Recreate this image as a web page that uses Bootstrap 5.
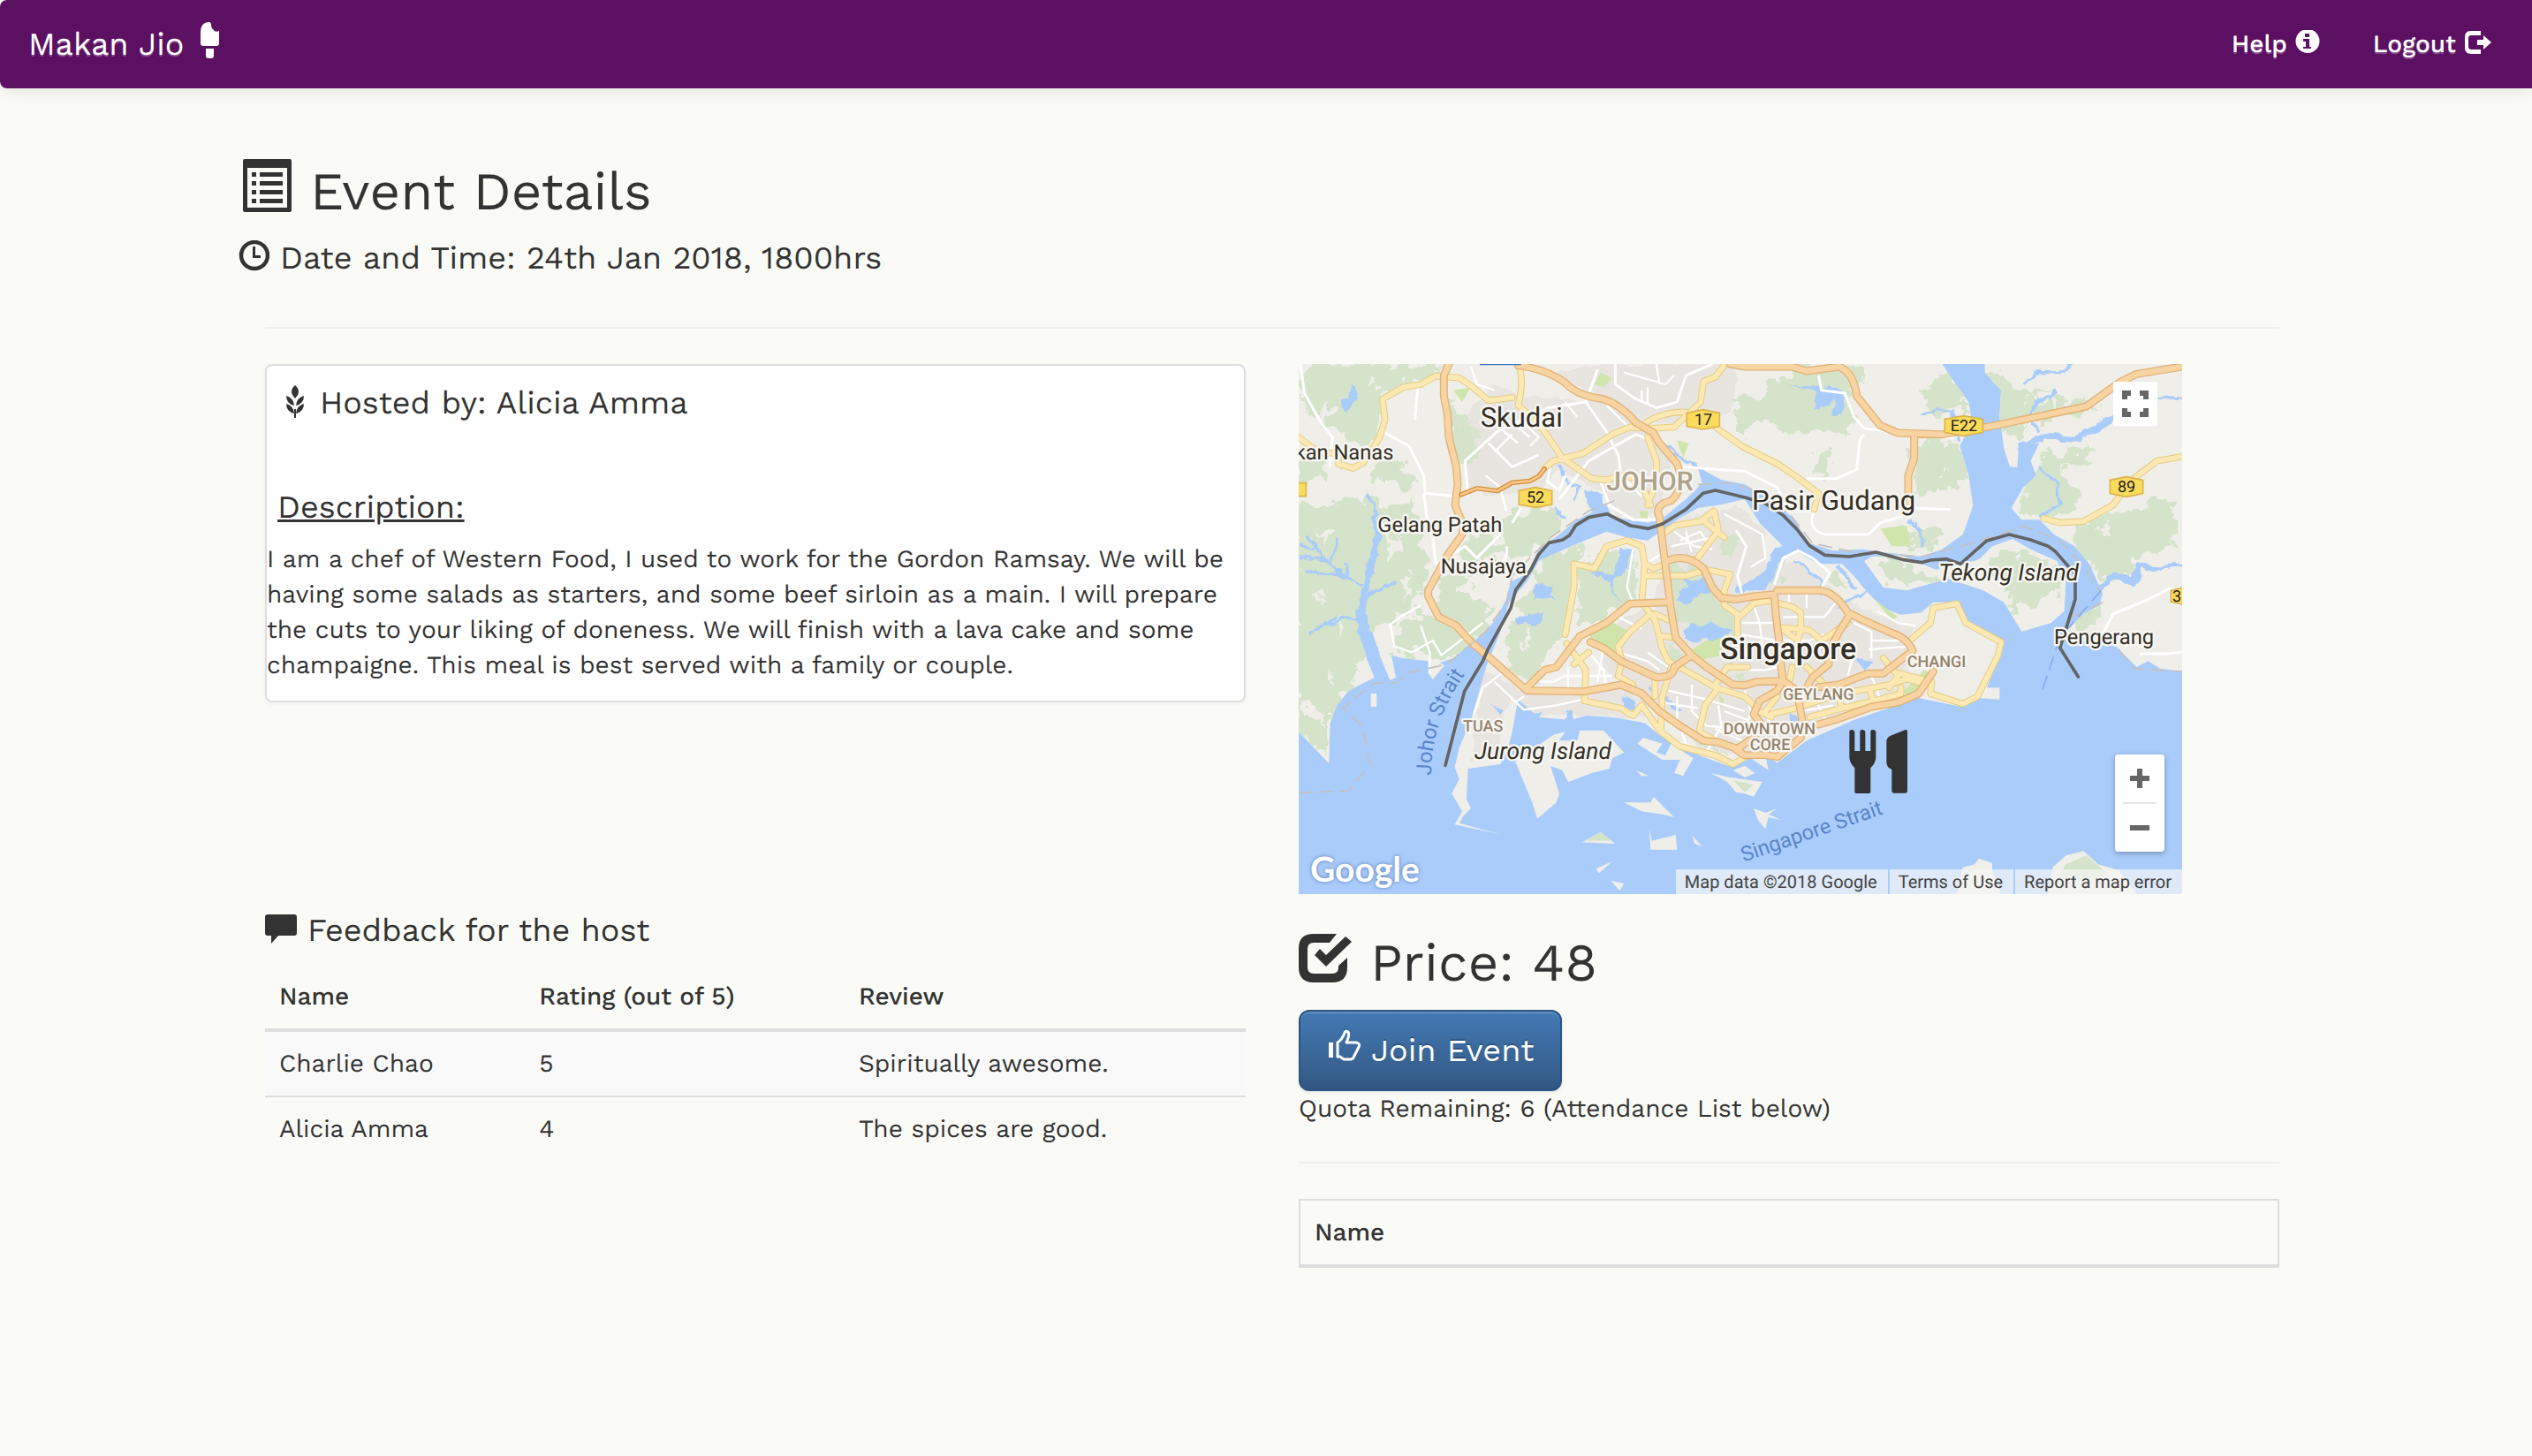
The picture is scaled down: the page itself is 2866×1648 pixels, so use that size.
<!DOCTYPE html>
<html lang="en">
<head>
<meta charset="utf-8">
<meta name="viewport" content="width=device-width, initial-scale=1">
<title>Makan Jio - Event Details</title>
<link href="https://cdn.jsdelivr.net/npm/bootstrap@5.3.0/dist/css/bootstrap.min.css" rel="stylesheet">
<style>
  body { background: #fafbf7; color: #333; font-family: "Work Sans", Inter, "Liberation Sans", sans-serif; font-size: 28px; line-height: 40px; text-rendering: geometricPrecision; }
  .topbar { background: #5c1062; min-height: 100px; padding: 0 46px 0 32px; border-radius: 8px 0 0 8px; box-shadow: 0 2px 18px rgba(0,0,0,.1); }
  .topbar a { color: #fff; text-decoration: none; text-shadow: 0 2px 0 rgba(255,255,255,.25); }
  .topbar .site-name { font-size: 36px; line-height: 40px; }
  .topbar .menu-link { font-size: 28px; font-weight: 500; }
  .page-wrap { max-width: 2340px; padding: 76px 23px 0 37px; margin: 0 auto; }
  .heading-block { margin-left: -30px; padding-bottom: 58px; }
  h1, h2, h3 { font-weight: 400; margin: 0; }
  h1, .price-line { font-size: 60px; line-height: 66px; }
  h2, h3 { font-size: 36px; line-height: 40px; }
  h2, h3 { gap: 12px; }
  h2 { margin-top: 22px; }
  h1 { gap: 20px; }
  h1 span { padding-top: 8px; }
  .price-line { gap: 20px; margin-top: 41px; padding-bottom: 20px; }
  .price-line span { padding-top: 4px; }
  hr { margin: 0; border: 0; border-top: 2px solid #eee; opacity: 1; }
  .split { --bs-gutter-x: 60px; margin-top: 40px; }
  .host-panel { border: 2px solid #ddd; border-radius: 8px; background: #fff; box-shadow: 0 2px 4px rgba(0,0,0,.05); padding: 22px 0 20px; }
  .desc-title { margin-top: 78px; padding-left: 12px; }
  .desc-text { margin: 0; padding-top: 19px; }
  .feedback { margin-top: 238px; }
  .quota { margin: 0 0 40px; }
  .plain-table { margin: 0; --bs-table-bg: transparent; --bs-table-color: #333; --bs-table-striped-color: #333; --bs-table-striped-bg: #f9f9f9; color: #333; border-color: #ddd; }
  .plain-table > :not(caption) > * > * { padding: 16px; border-bottom: 0; border-top: 2px solid #ddd; }
  .plain-table > thead > tr > th { font-weight: 500; border-top: 0; border-bottom: 4px solid #ddd; }
  .plain-table > tbody > tr:first-child > td { border-top: 0; }
  .feedback .plain-table { margin-top: 19px; }
  .plain-table.boxed { border: 2px solid #ddd; border-bottom: 0; margin-top: 40px; }
  .btn-join { background: linear-gradient(#4479b5, #325882); border: 2px solid #2b5580; border-radius: 12px; color: #fff; font-size: 36px; line-height: 48px; padding: 20px 30px; box-shadow: inset 0 2px 0 rgba(255,255,255,.15), 0 2px 4px rgba(0,0,0,.08); text-shadow: 0 -2px 0 rgba(0,0,0,.2); }
  .map-box { max-width: 1000px; aspect-ratio: 5 / 3; overflow: hidden; font-family: Roboto, sans-serif; }
  .map-box > svg { width: 100%; height: 100%; }
  .map-full { top: 20px; right: 28px; width: 50px; height: 50px; border: 0; padding: 10px; background: #fff; border-radius: 2px; line-height: 0; }
  .map-zoom { right: 20px; bottom: 48px; width: 56px; background: #fff; border-radius: 4px; box-shadow: 0 2px 6px rgba(0,0,0,.3); }
  .map-zoom button { height: 54px; border: 0; background: none; padding: 0; }
  .map-zoom .bar-line { height: 2px; margin: 0 9px; background: #e6e6e6; }
  .map-credit { right: 0; bottom: 0; gap: 2px; font-size: 20px; line-height: 28px; }
  .map-credit > * { background: rgba(245,245,245,.7); color: #444; text-decoration: none; padding: 0 12px 0 10px; }
  .map-logo { left: 13px; bottom: 8px; font-family: Lato, sans-serif; font-size: 39px; line-height: 40px; color: #fff; font-weight: 700; text-shadow: 0 0 4px rgba(60,90,150,.7); text-decoration: none; }
  svg { display: block; flex: none; }
  .land { fill: #efeee9; } .park { fill: #d5e3ca; } .town { fill: #e8e4e0; } .sea { fill: #aaccfb; } .lawn { fill: #cfe5ab; }
  .river { stroke: #aaccfb; } .minor { stroke: #fff; stroke-width: 9; }
  .case-y { stroke: #e5cd83; stroke-width: 23; } .core-y { stroke: #fce8b2; stroke-width: 17; }
  .case-o { stroke: #e2b276; stroke-width: 27; } .core-o { stroke: #f8d4a3; stroke-width: 19; }
  .lbl text { paint-order: stroke; stroke: #f7f6f2; stroke-width: 14; stroke-linejoin: round; fill: #332f26; }
  .lbl .t90 { font-size: 93px; } .lbl .t72 { font-size: 71px; } .lbl .area { font-size: 54px; font-weight: 500; fill: #94826a; }
  .lbl .ital { font-size: 79px; font-style: italic; } .lbl .capital { font-size: 102px; font-weight: 500; } .lbl .state { font-size: 90px; font-weight: 500; fill: #ada28a; }
  .water-lbl { font-size: 71px; fill: #5a85c8; }
  .shield path { fill: #fadb5c; stroke: #dcb54b; stroke-width: 5; } .shield text { font-size: 54px; fill: #222; text-anchor: middle; }
</style>
<script src="https://cdn.jsdelivr.net/npm/bootstrap@5.3.0/dist/js/bootstrap.bundle.min.js"></script>
</head>
<body>
<nav class="topbar d-flex justify-content-between align-items-center">
  <a href="#" class="site-name d-flex align-items-center">Makan Jio
    <svg class="ms-3" width="30" height="52" viewBox="-1 0 30 52" fill="#fff"><path d="M2 13Q2 1 12 1q2 0 2 4 0 3 3 5 1 3 6 1v14q0 3-3 3H5q-3 0-3-3z"/><path d="M8 31h9v8q0 3-3 3h-3q-3 0-3-3z"/></svg></a>
  <div class="d-flex">
    <a href="#" class="menu-link d-flex align-items-center me-5 pe-2">Help
      <svg class="ms-2" width="33" height="32" viewBox="0 0 33 32"><circle cx="15" cy="12.500" r="13.500" fill="#fff"/><path fill="#5c1062" d="M12 4h5v4h-5zM10 10h7v9h2v2h-9v-2h3v-6h-3z"/></svg></a>
    <a href="#" class="menu-link d-flex align-items-center">Logout
      <svg class="ms-2" width="32" height="32" viewBox="0 0 32 32" fill="#fff"><path d="M20 1H9Q2 1 2 8v12q0 7 7 7h11v-5H9q-3 0-3-3V9q0-3 3-3h11z"/><path d="M16 11h7V6l9 8-9 8v-5h-7z"/></svg></a>
  </div>
</nav>

<main class="page-wrap">
  <header class="heading-block">
    <h1 class="d-flex align-items-start"><svg class="ms-1" width="57" height="66" viewBox="0 0 57 66"><path fill="#333" fill-rule="evenodd" d="M3 4h51q2 0 2 2v56q0 2-2 2H3q-2 0-2-2V6q0-2 2-2zm3 10v45h45V14z"/><path fill="#333" d="M11 19h5v5h-5zM20 19h26v5H20zM11 29h5v5h-5zM20 29h26v5H20zM11 39h5v5h-5zM20 39h26v5H20zM11 49h5v5h-5zM20 49h26v5H20z"/></svg><span>Event Details</span></h1>
    <h2 class="d-flex align-items-center"><svg width="35" height="40" viewBox="0 0 35 40" fill="none" stroke="#333"><circle cx="18" cy="17" r="15" stroke-width="4.500"/><path d="M17.500 7v11.500H25" stroke-width="3"/></svg>Date and Time: 24th Jan 2018, 1800hrs</h2>
  </header>
  <hr>
  <div class="row split">
    <div class="col-6">
      <section class="host-panel">
        <h3 class="d-flex align-items-center"><svg class="ms-3" width="32" height="40" viewBox="0 0 32 40" fill="#333"><path d="M16 0q8 7 0 15-8-8 0-15zM6 12q8 2 9 11-9-2-9-11zm20 0q-8 2-9 11 9-2 9-11zM6 21q8 2 9 11-9-2-9-11zm20 0q-8 2-9 11 9-2 9-11zM15 27h2v10h-2z"/></svg>Hosted by: Alicia Amma</h3>
        <h3 class="desc-title text-decoration-underline">Description:</h3>
        <p class="desc-text">I am a chef of Western Food, I used to work for the Gordon Ramsay. We will be having some salads as starters, and some beef sirloin as a main. I will prepare the cuts to your liking of doneness. We will finish with a lava cake and some champaigne. This meal is best served with a family or couple.</p>
      </section>
      <section class="feedback">
        <h3 class="d-flex align-items-center"><svg width="36" height="40" viewBox="0 0 36 40" fill="#333"><path d="M3 2h30q3 0 3 3v18q0 3-3 3H15L7 35v-9H3q-3 0-3-3V5q0-3 3-3z"/></svg>Feedback for the host</h3>
        <table class="table table-striped plain-table">
          <colgroup><col style="width:26.500%"><col style="width:32.600%"><col></colgroup>
          <thead><tr><th>Name</th><th>Rating (out of 5)</th><th>Review</th></tr></thead>
          <tbody><tr><td>Charlie Chao</td><td>5</td><td>Spiritually awesome.</td></tr><tr><td>Alicia Amma</td><td>4</td><td>The spices are good.</td></tr></tbody>
        </table>
      </section>
    </div>
    <div class="col-6">
      <div class="map-box position-relative">
        <svg viewBox="15 21 3000 1800" preserveAspectRatio="xMidYMid slice">
          <defs>
            <path id="exp" d="M525 21L508 60 508 130 520 190 525 270 550 370 555 430 546 500 575 570 570 600 520 670 455 790 455 810 490 880 550 910 600 965 665 1020 790 1130 985 1133 1110 1110 1180 1140 1240 1200 1310 1250 1390 1300 1440 1305 1510 1330M760 26Q860 40 920 85 960 130 1050 140 1110 160 1160 220L1220 255 1240 290 1300 360Q1330 440 1280 485 1220 500 1240 540L1252 640 1280 860 1295 950 1350 1010 1400 1050 1490 1110 1530 1112 1570 1100 1660 1097M1265 690Q1330 660 1390 715L1420 780 1450 815 1500 820 1560 810 1630 803 1636 880 1645 950 1652 1040 1660 1100M1640 790H1790Q1840 800 1880 865L1930 890 2030 935Q2080 950 2100 995L2080 1010 2000 1072 1950 1072 1900 1090 1850 1110 1780 1118M1660 1097L1700 1125 1715 1175 1725 1230 1720 1290 1640 1355 1600 1348 1530 1350 1500 1330 1560 1290 1590 1250 1560 1210 1580 1165 1640 1130 1660 1097M1265 830L1140 835 1060 900 970 945M1005 965L1050 985 1110 1030 1230 1085Q1290 1085 1290 1050L1350 1010M970 945L890 1050 850 1060 790 1120M1885 875L1850 930 1815 1000 1815 1040 1760 1085 1745 1110M1780 1245L1850 1225 1960 1185 2050 1170 2120 1140 2170 1065M1480 21L1530 30 1690 30 1740 45 1850 30Q1900 50 1910 130L1990 230 2050 255 2200 260 2260 250 2380 230 2690 165 2800 85 2860 55 3015 30M2105 260L2105 340 2085 400 2085 500"/>
            <path id="arty" d="M15 270L80 320 150 325 150 360 200 375 235 355 290 270 308 210 300 140 370 100 430 90 480 62 560 68 600 95 660 145 740 135M765 30Q780 90 760 160L850 250 910 340 1010 410 1060 415 1110 400 1170 410 1210 500M850 375L880 350 980 325 1080 260 1140 235 1200 240 1290 235 1380 150 1390 80 1430 65 1460 25M1180 230Q1250 180 1330 185M1430 235L1520 300 1640 360 1700 400 1780 460 1765 515M1200 270L1230 350 1230 420 1200 500M920 940L950 780 950 700 1020 715 1060 640 1130 620 1180 640 1190 700 1220 715 1250 705M1190 700L1180 830 1225 890 1250 990 1270 1030 1380 1090 1430 1120 1530 1150 1580 1200 1620 1220M1195 740L1330 740 1400 720 1480 735 1460 790 1460 840 1505 870 1505 950M1250 600L1290 570 1380 555 1425 520 1440 580 1430 600 1370 680M1385 550L1460 610M1510 880L1560 835 1610 825 1690 845 1720 865 1720 920 1710 960 1650 915M1650 915L1750 925 1790 960 1880 900M1225 870L1270 890M1210 870L1140 930 1100 980 1110 1020M1110 1040L1100 1080 1150 1110M1225 1085L1225 1150M1280 1050L1250 1150 1245 1260M1180 1180L1245 1270 1310 1320 1430 1350 1490 1380 1540 1350M925 970L990 1060 985 1165 1110 1190 1150 1215 1180 1180M1000 1000L950 1040M1440 1120L1395 1180 1375 1270 1430 1300M1430 1110L1470 1050 1540 1050M1690 1050L1680 1110M1740 1050L1780 1090 1800 1110M1620 1210L1700 1190 1860 1140 2020 1110 2080 1090 2150 1110M1750 1220L1860 1190 1970 1165 2060 1140 2060 1120M1845 1140L1860 1190M1955 1125L1965 1165M1250 945L1290 950M2000 1020L2050 1080 2020 1120M2090 960L2160 900 2170 850 2250 835 2280 900 2400 965 2390 1010 2320 1150 2270 1175 2160 1140 2165 1100 2050 1070M1600 1200L1640 1150M2545 545L2600 560 2680 555 2780 500 2810 460 2850 410 2930 350 3015 335"/>
            <path id="johor" d="M15 21H2200L2240 80 2290 150 2300 210 2275 270 2260 300 2290 400 2305 500 2285 560 2270 600 2200 650 2130 675 2000 660 1930 650 1830 655 1750 630 1690 540 1600 470 1530 430 1450 415 1370 370 1385 425 1330 480 1250 545 1200 560 1080 540 1060 500 960 550 900 600 830 650 790 735 735 760 720 820 690 880 650 930 600 970 540 1020 495 1035 510 1045 470 1092 455 1070 455 1030 370 1020 330 1010 345 1085 325 1095 290 1010 265 930 225 930 245 1020 272 1085 185 1130 145 1180 122 1240 118 1378 15 1270z"/>
            <path id="eastern" d="M2345 21H3015V1065L2940 1055 2900 1030 2860 1050 2830 1020 2790 980 2620 930 2680 870 2735 840 2745 800 2700 700 2650 640 2580 600 2530 550 2470 550 2435 510 2475 440 2520 400 2500 350 2530 290 2460 300 2455 372 2430 370 2410 310 2395 200 2400 110 2345 50z"/>
            <path id="island" d="M600 1230L655 1040 700 930 730 830 790 760 830 690 940 640 1060 590 1130 610 1200 620 1300 550 1370 510 1440 500 1530 480 1580 560 1660 640 1600 720 1520 790 1600 790 1640 700 1700 655 1780 700 1860 700 1900 740 1950 800 2000 850 2060 872 2130 865 2170 830 2240 830 2280 905 2400 965 2400 1000 2340 1150 2350 1120 2395 1120 2395 1160 2320 1155 2265 1185 2120 1155 1900 1230 1740 1300 1640 1375 1600 1350 1610 1400 1550 1360 1480 1388 1320 1330 1240 1280 1190 1240 1080 1220 990 1215 940 1230 830 1220 760 1160 740 1270 730 1310 700 1380 590 1395 585 1500 600 1530 575 1555 560 1580 700 1618 545 1585 570 1540 535 1480 560 1430 545 1390 560 1325z"/>
            <path id="tekong" d="M1935 690L1960 675 2060 670 2180 720 2230 700 2310 690 2330 680 2370 640 2440 615 2500 650 2590 690 2620 760 2615 860 2570 900 2470 930 2410 830 2340 790 2220 750 2080 790 2000 780z"/>
            <clipPath id="shore"><use href="#johor"/><use href="#eastern"/><use href="#island"/><use href="#tekong"/></clipPath>
            <filter id="ragged" x="0" y="0" width="100%" height="100%"><feTurbulence type="fractalNoise" baseFrequency="0.02" numOctaves="4" seed="4" result="n"/><feDisplacementMap in="SourceGraphic" in2="n" scale="110" xChannelSelector="R" yChannelSelector="G"/></filter>
            <filter id="ripple" x="0" y="0" width="100%" height="100%"><feTurbulence type="fractalNoise" baseFrequency="0.02" numOctaves="3" seed="9" result="n"/><feDisplacementMap in="SourceGraphic" in2="n" scale="36" xChannelSelector="R" yChannelSelector="G"/></filter>
          </defs>
          <rect class="sea" x="15" y="21" width="3000" height="1800"/>
          <g class="land">
            <use href="#johor"/><use href="#eastern"/><use href="#island"/><use href="#tekong"/>
            <path d="M750 1370L880 1280 920 1270 900 1300 960 1300 970 1265 1050 1265 1120 1340 1080 1360 1070 1395 1010 1410 930 1440 910 1400 870 1385 900 1480 890 1510 825 1565 810 1515z"/>
            <path d="M1185 1290L1250 1310 1230 1340 1260 1350 1280 1310 1355 1360 1320 1420 1290 1410 1310 1365 1250 1365 1165 1310zM1160 1400L1205 1420 1180 1420zM1120 1510L1210 1510 1220 1490 1290 1560 1250 1550 1180 1540zM978 1645L1040 1610 1090 1650zM1205 1600L1215 1640 1295 1620 1300 1670 1210 1670zM1350 1620L1385 1660 1360 1650zM1025 1735L1080 1710 1035 1750zM1075 1775L1120 1785 1105 1810zM1415 1410L1480 1425 1590 1440 1560 1490 1530 1480 1500 1475 1470 1440zM1490 1400L1530 1385 1565 1410 1530 1425z"/>
            <path d="M1560 1530L1600 1545 1640 1530 1610 1550 1655 1570 1610 1560 1600 1600 1575 1570zM2250 1821L2270 1730 2310 1720 2325 1700 2370 1715 2370 1740 2400 1821zM2560 1821L2575 1730 2620 1690 2680 1675 2730 1720 2800 1740 2860 1821z"/>
            <path d="M260 1140H280V1185H260z"/>
          </g>
          <g clip-path="url(#shore)">
            <g class="town" filter="url(#ripple)">
              <path d="M560 220L680 90 760 130 1050 150 1190 230 1280 340 1240 540 1090 540 1050 460 900 380 830 450 690 470 580 450zM1000 21L1500 21 1490 190 1330 220 1160 210 1050 130 850 60zM640 1060L790 1140 1100 1120 1200 1170 1190 1220 800 1210 730 1160 700 1300 600 1380zM1240 560L1500 500 1600 590 1600 700 1700 690 1900 840 2100 910 2080 1130 1750 1270 1620 1360 1400 1330 1200 1180 1050 1050 1100 900 1220 850 1250 700z"/>
            </g>
            <g class="park" filter="url(#ragged)">
              <path d="M70 21L500 21 495 60 380 90 290 130 290 220 240 300 190 270 130 230 90 240 15 150 15 80 60 90zM15 300L90 330 130 370 120 430 60 410 15 460zM250 370L340 340 410 400 430 450 350 430 280 410zM530 150L600 220 650 300 600 360 550 380 530 290zM0 480L120 510 220 460 290 520 400 480 430 530 420 640 460 720 440 810 340 900 250 930 240 1020 180 1130 130 1190 120 1350 0 1260zM590 600L760 520 850 510 920 560 870 620 810 660 640 680 600 740 560 680zM500 730L600 740 560 800 640 830 680 870 620 970 560 1020 460 1025 340 1000 330 930 420 860 480 880zM60 21L130 60 60 100 10 60zM130 160L60 180 110 220z"/>
              <path d="M830 690L930 640 1000 640 960 700 945 790 930 930 860 1030 790 1110 700 1020 740 900zM980 700L1060 660 1150 660 1170 820 1050 890 960 900zM1280 700L1370 690 1410 760 1450 820 1500 880 1490 940 1440 960 1350 930 1290 890 1270 800zM1260 960L1330 1010 1290 1050 1250 1020zM1700 21L1900 21 1930 80 1870 120 1930 220 1870 250 1690 260 1600 220 1500 250 1500 130 1590 120 1640 90zM2120 290L2260 290 2290 360 2270 440 2120 460 2100 360zM2200 60L2270 100 2280 190 2180 190 2130 120zM2350 50L2440 60 2420 120 2640 130 2720 170 2640 200 2500 200 2450 280 2410 290zM2480 440L2530 340 2700 290 2690 350 2600 380 2640 430 2690 480 2560 540 2470 540zM2620 560L2800 520 2990 480 3000 640 2860 680 2820 750 2740 750 2680 650zM2650 870L2740 850 2700 920 2660 930zM1950 670L2060 680 2180 740 2180 760 2100 790 2010 730zM2400 650L2560 680 2610 760 2610 800 2560 800 2500 850 2430 860 2420 780 2370 720zM2060 600L2210 580 2200 640 2090 660zM1770 320L1820 330 1810 400 1760 390z"/>
              <path d="M1610 760L1650 680 1670 690 1640 770zM1480 1060L1540 1060 1530 1100 1470 1095zM1460 620L1500 600 1490 680 1440 680zM1300 1240L1400 1310 1470 1340 1400 1330zM1800 760L1850 740 1870 790z"/>
            </g>
            <g class="land" filter="url(#ragged)">
              <path d="M40 180L110 210 140 280 80 260zM320 170L380 120 440 160 420 250 350 240zM60 560L130 600 110 650zM310 560L370 640 330 700zM90 1070L140 1080 120 1110zM20 1180L80 1170 110 1260 60 1230zM180 470L230 440 240 480zM380 740L420 780 360 820zM760 960L800 930 810 980zM640 590L720 560 710 610zM2190 380L2220 370 2200 400zM2500 150L2560 130 2580 170zM2700 580L2760 560 2770 610zM2640 690L2700 700 2660 720zM250 60L290 90 260 110zM150 880L190 900 160 960zM70 780L110 800 90 840zM560 940L590 920 600 950z"/>
            </g>
          </g>
          <g class="park"><path d="M2580 1790L2620 1720 2690 1690 2760 1750 2700 1780 2630 1760zM990 1640L1040 1612 1080 1640zM1490 1435L1560 1450 1530 1475z"/></g>
          <g class="lawn"><path d="M1005 940L1075 895 1145 935 1095 1000 1005 965zM1345 995L1400 960 1445 945 1455 1010 1380 1025zM2060 1140L2140 1060 2170 1080 2130 1150zM1170 520L1200 520 1200 550 1180 550zM540 110L600 100 570 150zM1040 50L1080 70 1050 100 1020 90zM1300 280L1340 290 1320 340zM1990 580L2080 570 2090 640 2030 640zM1970 820L2050 880 2030 890zM1440 1140L1460 1160 1450 1190z"/></g>
          <g class="sea" filter="url(#ripple)">
            <path d="M190 85L215 100 205 140 190 185 175 180 160 150 185 140zM1005 730L1080 740 1110 640 1150 650 1130 710 1080 750 1100 830 1070 760zM815 760L880 780 860 800 880 820 820 825zM1290 820L1340 770 1310 745 1370 760 1390 740 1440 770 1400 800 1330 830zM1320 920L1350 900 1370 920 1410 900 1450 920 1490 930 1450 950 1400 950 1370 970 1330 960zM750 880L840 870 830 900 760 910zM990 450L1050 470 1050 530 1000 510zM1500 770L1590 750 1610 690 1660 620 1650 680 1610 770 1560 790 1500 795zM1680 90L1790 100 1870 110 1860 190 1820 190 1840 140 1770 180 1780 120zM1900 1020L1970 1040 1930 1060zM665 1170L720 1200 700 1215zM820 1200H840V1240H820zM920 1200H945V1240H920zM1110 1150L1160 1160 1150 1195 1110 1180zM1680 1215L1720 1220 1710 1250z"/>
          </g>
          <g class="river" fill="none" stroke-linejoin="round" stroke-linecap="round" filter="url(#ripple)">
            <path stroke-width="38" d="M225 860L235 920 290 1070 310 1140"/><path stroke-width="24" d="M225 880L240 790 260 700 285 610M2470 300L2560 270 2650 275 2720 240 2790 200M2740 780L2790 740 2850 760 2870 705 2920 720"/><path stroke-width="10" d="M285 620L270 520 250 465M225 770L160 740 120 690 70 650 50 610M120 690L20 680M240 810L280 790 340 760M160 740L40 720M210 880L110 900M130 680L150 610M70 650L20 640M180 750L170 700M140 880L60 930M2920 720L3015 700M2530 250L2500 200 2520 160 2590 110M2530 540L2600 500 2580 420 2540 380M2640 21L2600 50 2520 50 2480 80M2130 640L2130 590 2090 550M3015 140L2940 130M1370 370L1300 330 1240 290M880 510L920 550M1310 1200L1210 1120M900 370L930 430 970 440 950 480M2260 290L2240 180 2130 190M1700 690L1790 760 1780 800M1850 710L1910 780M1850 850L1940 790"/>
          </g>
          <g class="minor" fill="none" stroke-linejoin="round">
            <path d="M20 21L35 120 90 220 130 270 120 370M300 250L390 300 440 400 445 460 550 470M440 460L450 540 470 600 480 700 580 640 620 680 700 600M720 640Q730 680 690 720M590 470L580 350 690 250 860 170 990 150 1030 40M660 290L740 370 830 330M1090 21L1090 90 1160 140 1230 170 1300 150 1330 60 1420 21M990 150L1060 250 1100 330 1110 400 1180 470M900 480L1000 350 1160 260 1210 280M1040 420L1070 500 1150 550 1230 550M870 360L860 420 900 450 920 400M1320 370L1450 380 1530 385 1640 440 1680 520 1760 520M1780 60L1790 110 1870 120 1900 200 1935 240 2240 272M1935 260L1920 280 1910 380 1840 410 1740 410M1765 520Q1740 580 1800 600L1950 600 1990 560 2060 540 2090 510 2230 515M420 90L410 210M1500 585L1535 640 1505 740 1520 800M1630 770L1660 680 1710 655 1760 680 1820 730 1790 780M2750 930L2780 870 2900 820 2980 780M2870 1005H2960L3015 1000M770 510L740 560"/>
            <path stroke-width="7" d="M325 900L340 980 400 1000 470 960 500 1010 640 900M430 910L460 1000 460 1070M320 910L360 880 430 840M610 1210L640 1120 720 1060M680 1100L780 1195 890 1180 980 1160M780 1150L750 1170M830 1100L880 1100 920 1080 1080 1080M1000 1000L1050 1060 1060 1120M930 1050V1130M1050 980L1030 1100M1100 1000L1200 1030 1240 1060M1200 1000L1270 1050M1100 880L1180 920M1270 1130L1400 1160 1530 1200M1350 1110L1350 1200 1400 1250 1530 1260M1300 1150V1230L1330 1310M1250 1170L1370 1190M1440 1180L1450 1250 1400 1340M1530 1060L1600 1060 1640 1050M1560 840L1580 900 1590 980M1520 900H1630M1520 940L1640 960M1660 880H1800L1840 830M1680 850V800M1740 800V850M1660 960L1750 960 1850 920M1900 900L1960 930 1960 1020M1960 960L2060 960M1950 990L2090 980M1980 860L2050 900 2110 910M1900 1000L1880 1080M1860 1090L1890 1210M1960 1080L1990 1160M1770 1160L1810 1240M1720 1200L1830 1180M1530 1130L1550 1200 1530 1280M1600 1210L1650 1300M1620 1180V1280M1460 1200L1540 1230M1430 1260L1520 1300M1290 590L1360 640 1420 650M1310 620L1380 590 1410 640M1330 590L1350 660M1280 640L1420 610M1150 650L1130 780 1150 830 1090 870M1460 530L1590 600 1600 680 1550 710M1210 690L1240 670M700 240L760 290M740 220L800 270M680 320L740 260M1120 50L1260 90 1290 60M1180 110V150M1200 100V160M1230 21L1240 90M1060 160L1130 230M600 30L620 90 680 110M800 300L830 270 780 220M920 150L960 200M650 400L700 440 720 520"/>
          </g>
          <g fill="none" stroke-linejoin="round" stroke-linecap="round"><use href="#arty" class="case-y"/><use href="#arty" class="core-y"/><use href="#exp" class="case-o"/><use href="#exp" class="core-o"/>
            <path stroke="#d98c32" stroke-width="16" d="M567 464L620 443 690 452 740 424 800 418 830 402 850 377"/><path stroke="#f8c98c" stroke-width="8" d="M567 464L620 443 690 452 740 424 800 418 830 402 850 377"/></g>
          <g fill="none" stroke="#c6c0bd" stroke-width="5" stroke-dasharray="48 22"><path d="M15 1477L185 1470 258 1380 230 1250 165 1190 270 1105 345 1103 385 1070 520 1040 650 930 720 830 740 740 870 610 1000 520 1100 480M1370 430L1480 425 1600 460 1690 540 1760 630 1900 660 2130 675 2300 630 2480 572 2600 620 2690 720 2740 800M2745 830L2640 880M2800 990L2850 1055 3015 1065"/><path stroke="#8aaaf0" d="M2740 790L2600 950 2540 1130"/></g>
          <path fill="none" stroke="#646464" stroke-width="11" stroke-linecap="round" stroke-linejoin="round" d="M513 1384L578 1132 640 1030 660 985 735 850 752 788 800 725 830 668 865 628 912 618 935 602 957 568 1000 542 1062 530 1142 570 1203 580 1250 564 1330 515 1388 460 1430 450 1530 474 1600 495 1660 535 1705 580 1750 638 1802 670 1885 675 1975 660 2065 685 2130 695 2160 687 2215 683 2262 700 2350 622 2427 600 2500 618 2560 640 2585 658 2652 735 2652 820 2600 985 2662 1083"/>
          <path stroke="#3b6fc4" stroke-width="5" d="M630 22H770"/>
          <g class="lbl">
            <text class="t90" x="632" y="235">Skudai</text><text class="t72" x="2" y="346">kan Nanas</text><text class="t72" x="283" y="592">Gelang Patah</text><text class="t72" x="497" y="731">Nusajaya</text><text class="state" x="1060" y="449">JOHOR</text><text class="t90" x="1554" y="517">Pasir Gudang</text><text class="ital" x="2188" y="756">Tekong Island</text><text class="ital" x="612" y="1361">Jurong Island</text><text class="t72" x="2580" y="972">Pengerang</text><text class="capital" x="1446" y="1022">Singapore</text>
            <text class="area" x="573" y="1270">TUAS</text><text class="area" x="2081" y="1051">CHANGI</text><text class="area" x="1660" y="1162">GEYLANG</text><text class="area" x="1457" y="1278">DOWNTOWN</text><text class="area" x="1547" y="1332">CORE</text>
          </g>
          <path id="johorStrait" fill="none" d="M465 1418C465 1290 500 1185 590 1060"/><text class="water-lbl"><textPath href="#johorStrait">Johor Strait</textPath></text>
          <text class="water-lbl" transform="translate(1526 1712) rotate(-19)">Singapore Strait</text>
          <g class="shield"><path d="M1333 187L1388 176 1444 187V233L1388 243 1333 233z"/><text x="1389" y="229">17</text><path d="M763 451L819 440 875 451V498L819 508 763 498z"/><text x="819" y="493">52</text><path d="M2209 208L2273 197 2338 208V254L2273 265 2209 254z"/><text x="2274" y="250">E22</text><path d="M2770 415L2826 404 2882 415V461L2826 472 2770 461z"/><text x="2826" y="457">89</text><path d="M5 425H40V470H5z"/><path d="M2977 791L3020 780V838L2977 828z"/><text x="2997" y="827">3</text></g>
          <path fill="#333" d="M1885 1270q0-7 8-7t10 7v65h18v-65q0-7 8-7t10 7v65h18v-65q0-7 8-7t10 7v85q0 20-18 38v79q0 7-8 7h-38q-8 0-8-7v-79q-18-18-18-38zM2011 1304q0-14 12-20l50-20q9-4 9 5v202q0 7-8 7h-37q-8 0-8-7v-73q-18-8-18-25z"/>
        </svg>
        <a class="map-logo position-absolute" href="#">Google</a>
        <button class="map-full position-absolute" aria-label="Toggle fullscreen view"><svg width="30" height="30" viewBox="0 0 30 30" fill="none" stroke="#666" stroke-width="6"><path d="M3 10V3h7M20 3h7v7M27 20v7h-7M10 27H3v-7"/></svg></button>
        <div class="map-zoom position-absolute d-flex flex-column">
          <button aria-label="Zoom in"><svg class="mx-auto" width="22" height="22" viewBox="0 0 22 22"><path fill="#666" d="M8 0h6v8h8v6h-8v8H8v-8H0V8h8z"/></svg></button>
          <div class="bar-line"></div>
          <button aria-label="Zoom out"><svg class="mx-auto" width="22" height="22" viewBox="0 0 22 22"><path fill="#666" d="M0 8h22v6H0z"/></svg></button>
        </div>
        <div class="map-credit position-absolute d-flex"><span>Map data ©2018 Google</span><a href="#">Terms of Use</a><a href="#">Report a map error</a></div>
      </div>
      <div class="price-line d-flex align-items-start"><svg width="61" height="66" viewBox="0 0 61 66" fill="#333"><path d="M43 4H17Q0 4 0 20v22q0 17 17 17h21q17 0 17-17V31l-10 9v2q0 7-7 7H17q-7 0-7-7V21q0-7 7-7h18z"/><path d="M53 7l7 6-29 28-13-13 6-7 7 7z"/></svg><span>Price: 48</span></div>
      <button class="btn btn-join d-flex align-items-center"><svg class="me-2" width="42" height="48" viewBox="0 0 42 48"><path fill="#fff" d="M2 15h5v17H2z"/><path fill="none" stroke="#fff" stroke-width="3" stroke-linejoin="round" d="M12 15q5-3 8-11 1-3 4-1 2 3-2 12h11q5 1 3 5l-6 12q-1 2-4 2h-7l-4-3h-3z"/></svg>Join Event</button>
      <p class="quota">Quota Remaining: 6 (Attendance List below)</p>
      <hr>
      <table class="table plain-table boxed"><thead><tr><th>Name</th></tr></thead></table>
    </div>
  </div>
</main>
</body>
</html>
